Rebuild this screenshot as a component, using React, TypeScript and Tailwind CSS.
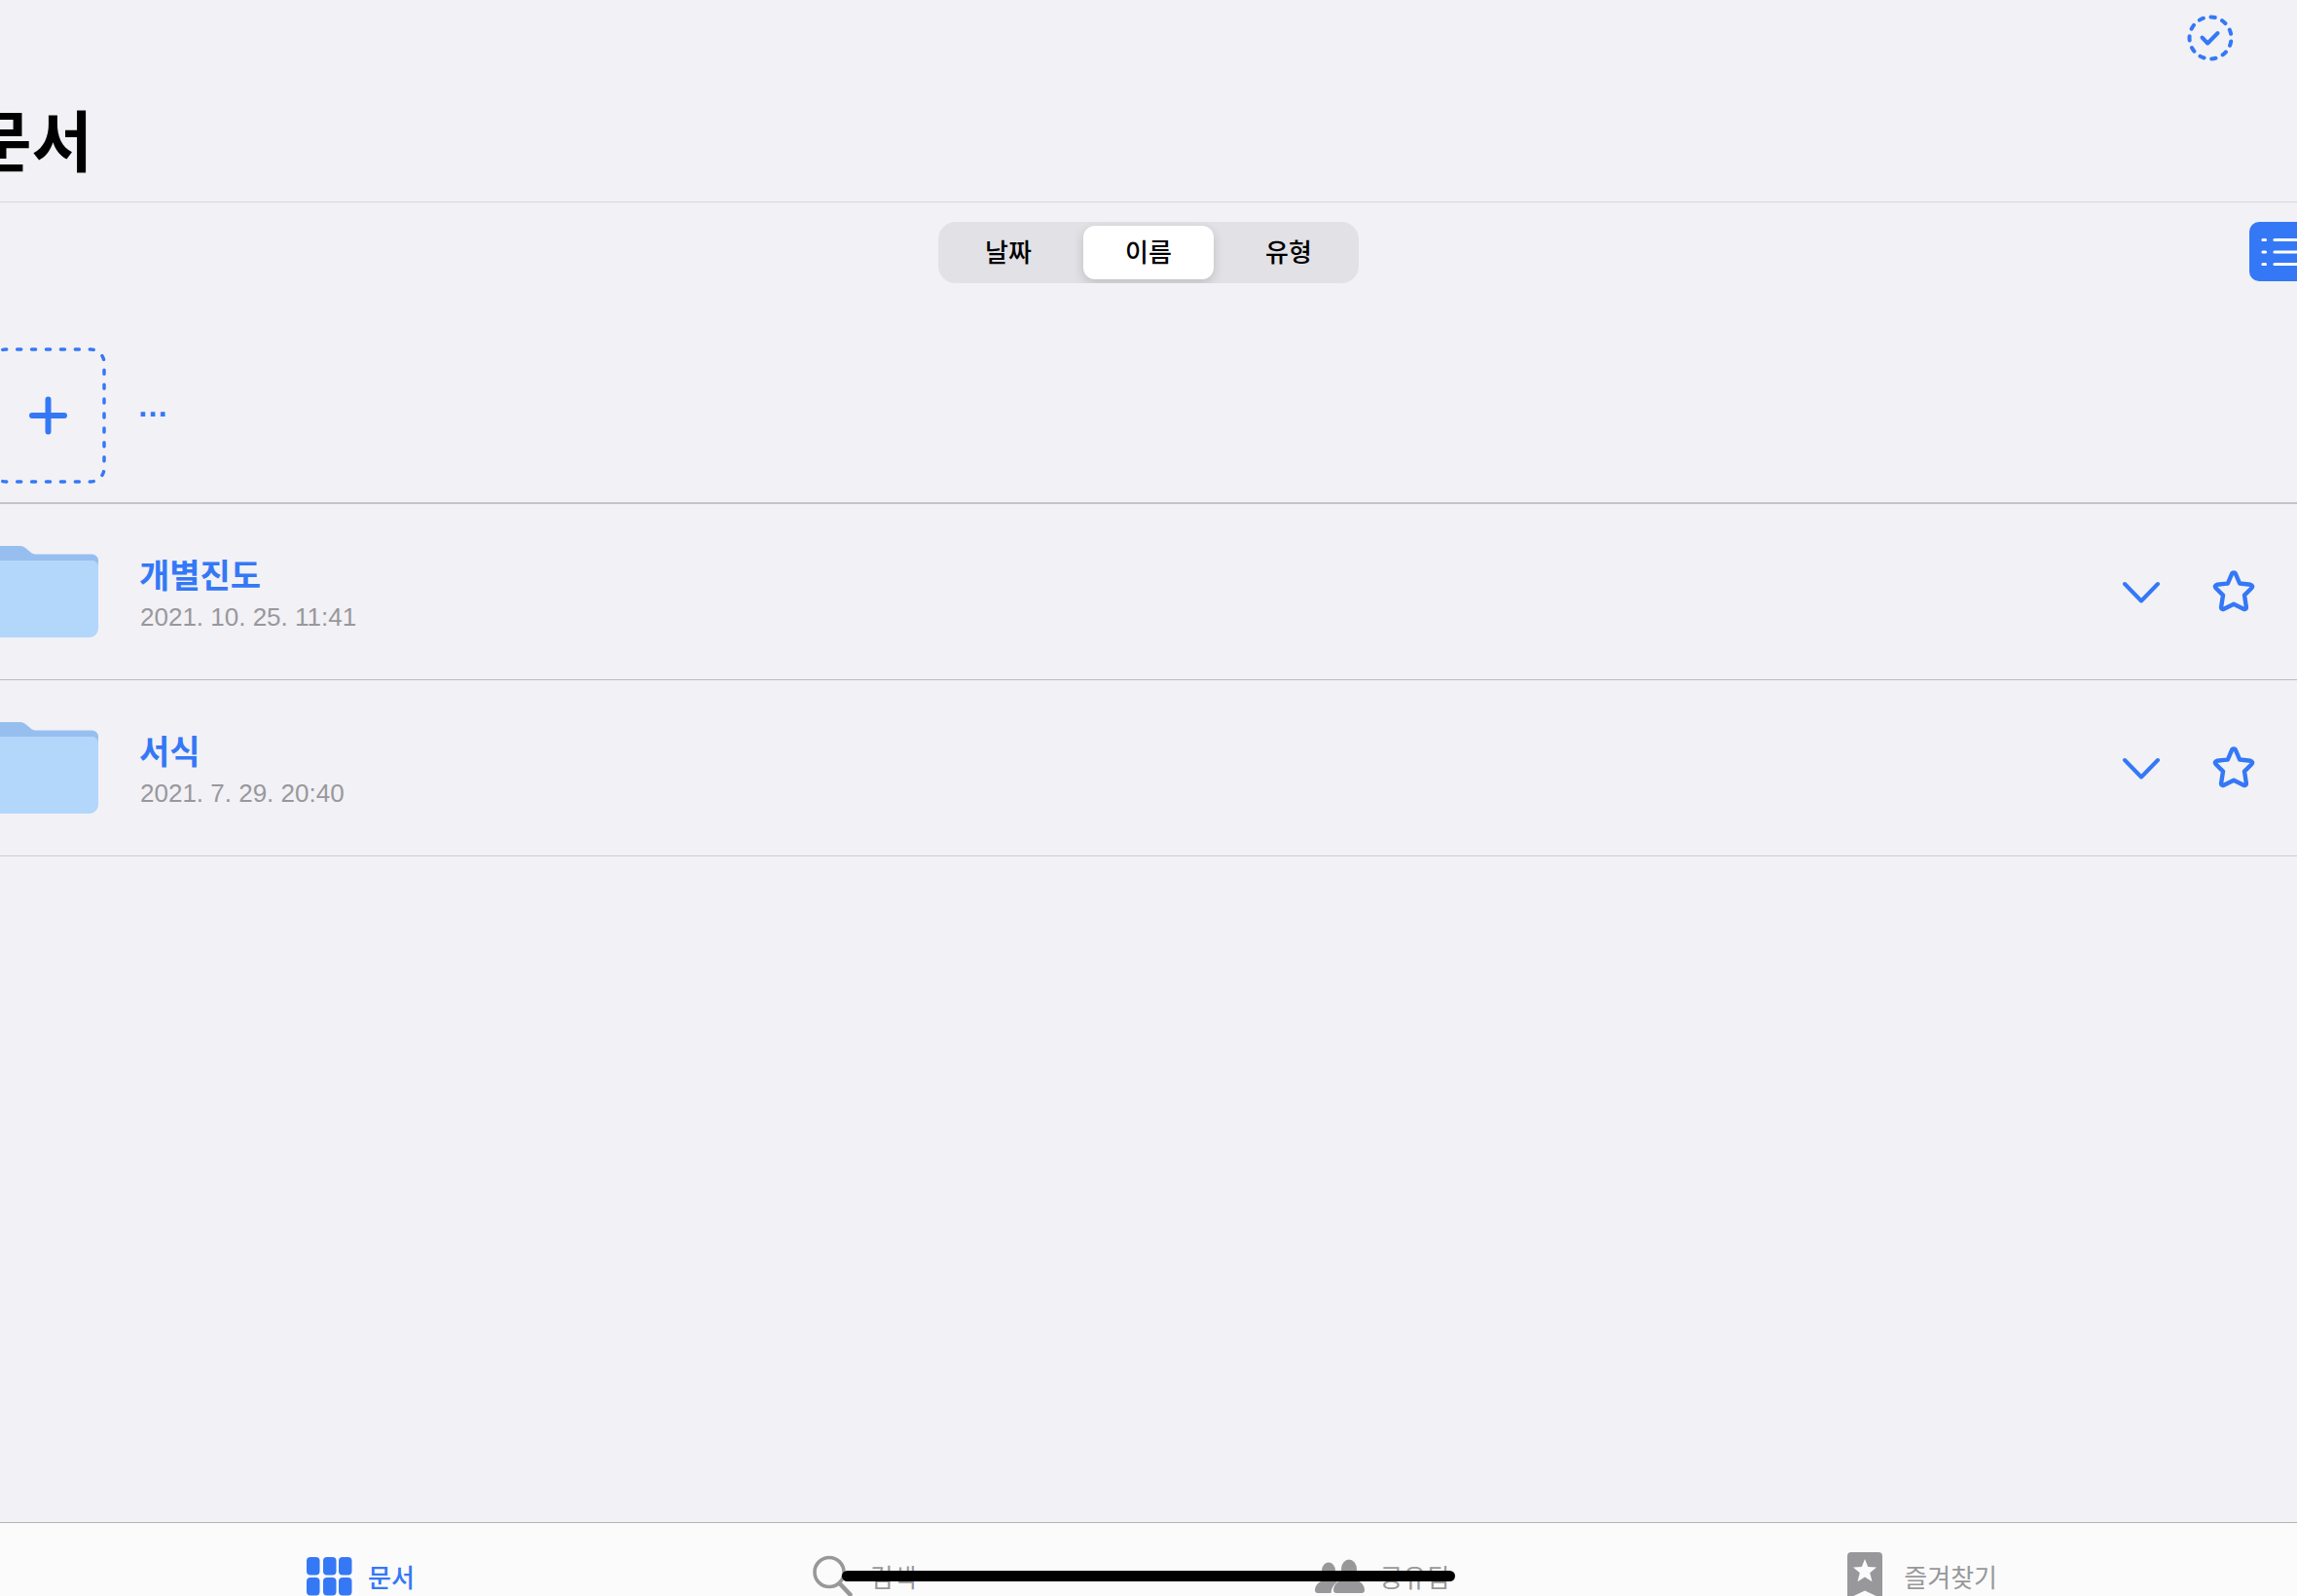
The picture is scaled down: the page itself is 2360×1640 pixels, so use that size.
import type { ReactNode } from 'react';

const FONT = "font-['Liberation_Sans','Noto_Sans_CJK_KR',sans-serif]";

type Entry = { name: string; date: string };

const entries: Entry[] = [
  { name: '개별진도', date: '2021. 10. 25. 11:41' },
  { name: '서식', date: '2021. 7. 29. 20:40' },
];

const STAR =
  'M24 7.5c1 0 1.7.6 2 1.4l4.1 9.6 11.2 1.3c1.8.3 2.4 2.2 1.1 3.4L35 30.6l1.9 12.2c.2 1.8-1.3 2.8-2.8 2L24 39.800l-10.1 5c-1.5.8-3-.2-2.800-2L13 30.6l-7.400-7.400c-1.300-1.200-.7-3.100 1.100-3.400l11.200-1.300L22 8.900c.3-.8 1-1.400 2-1.400z';

function SelectIcon() {
  return (
    <svg width="50" height="50" viewBox="0 0 50 50" fill="none" stroke="currentColor" strokeWidth="4" strokeLinecap="round" strokeLinejoin="round">
      <circle cx="25" cy="25" r="21.5" pathLength="110" strokeDasharray="3.6 6.4" strokeDashoffset="-2.9" />
      <path d="M16.500 24.500l5.700 6L32.500 20" />
    </svg>
  );
}

function ListIcon() {
  return (
    <svg width="50" height="32" viewBox="0 0 50 32" fill="none" stroke="currentColor" strokeWidth="3.200" strokeLinecap="round">
      <path d="M3 3.500h2.500M3 16h2.500M3 28.500h2.500M15 3.500h32M15 16h32M15 28.500h32" />
    </svg>
  );
}

function NewTile() {
  return (
    <svg width="120" height="142" viewBox="0 0 120 142" fill="none" stroke="currentColor" strokeLinecap="round">
      <path
        d="M59.500 3H103a14 14 0 0 1 14 14V125a14 14 0 0 1 -14 14H16a14 14 0 0 1 -14 -14V17a14 14 0 0 1 14 -14Z"
        pathLength="320"
        strokeWidth="3.500"
        strokeDasharray="2.700 7.300"
        strokeDashoffset="1.350"
      />
      <path d="M59.500 54.500v33M43 71h33" strokeWidth="6" />
    </svg>
  );
}

function FolderIcon() {
  return (
    <svg width="112" height="94" viewBox="0 0 112 94">
      <path d="M0 6a6 6 0 0 1 6-6H31c8 0 10 8.500 17 8.500h57a6.500 6.500 0 0 1 7 7V50H0z" fill="#96bff0" />
      <path d="M0 20a5 5 0 0 1 5-5H105a7 7 0 0 1 7 5.500V85a9 9 0 0 1 -9 9H9a9 9 0 0 1 -9 -9z" fill="#b2d7fb" />
    </svg>
  );
}

function ChevronIcon() {
  return (
    <svg width="40" height="24" viewBox="0 0 40 24" fill="none" stroke="currentColor" strokeWidth="4" strokeLinecap="round" strokeLinejoin="round">
      <path d="M3 4L20 21.500L37 4" />
    </svg>
  );
}

function StarIcon() {
  return (
    <svg width="48" height="52" viewBox="0 1 48 52" fill="none" stroke="currentColor" strokeWidth="4.400" strokeLinejoin="round">
      <path d={STAR} />
    </svg>
  );
}

function GridIcon() {
  return (
    <svg width="47" height="60" viewBox="0 -5 47 60" fill="currentColor">
      {[0, 17, 33].map((x) =>
        [0, 21].map((y) => <rect key={x + '-' + y} x={x} y={y} width="13.500" height="18.500" rx="4" />),
      )}
    </svg>
  );
}

function SearchIcon() {
  return (
    <svg width="43" height="60" viewBox="0 -5 43 60" fill="none" stroke="currentColor" strokeLinecap="round">
      <circle cx="17" cy="15.500" r="15" strokeWidth="3.600" />
      <path d="M28 27.500l10.500 11" strokeWidth="4.600" />
    </svg>
  );
}

function PeopleIcon() {
  return (
    <svg width="51" height="60" viewBox="0 -5 51 60" fill="currentColor">
      <ellipse cx="14" cy="14" rx="7" ry="8.500" />
      <ellipse cx="35" cy="12.500" rx="8" ry="10" />
      <path d="M0 34c0-6 6-11 14-11 4 0 7 1 9 2.500-4 2.800-6 6.500-6.500 11.500H3c-2 0-3-1-3-3z" />
      <path d="M19 34c0-7 7-12 16-12S51 27 51 34c0 2-1 3-3 3H22c-2 0-3-1-3-3z" />
    </svg>
  );
}

function BookmarkIcon() {
  return (
    <svg width="42" height="60" viewBox="0 0 42 60">
      <path d="M0 4a4 4 0 0 1 4-4h28a4 4 0 0 1 4 4V48L18 39.500 0 48z" fill="currentColor" />
      <path d="M18 7l3.200 8 8.800.6-6.800 5.600 2.300 9-7.500-4.700-7.500 4.700 2.300-9L6 15.600l8.800-.6z" fill="#fbfbfc" />
    </svg>
  );
}

function Tab({ icon, label, active }: { icon: ReactNode; label: string; active?: boolean }) {
  return (
    <button
      type="button"
      aria-current={active ? 'page' : undefined}
      className={
        'flex items-start gap-4 whitespace-nowrap text-[26px] leading-10 ' +
        (active ? 'font-medium text-[#3478f6]' : 'font-normal text-[#98989a]')
      }
    >
      <span className="pt-[30px]">{icon}</span>
      <span className="pt-[37px]">{label}</span>
    </button>
  );
}

function Segment({ label, checked }: { label: string; checked?: boolean }) {
  return (
    <label className="flex w-36 cursor-pointer px-[5px] py-1">
      <input type="radio" name="sort" defaultChecked={checked} className="peer sr-only" />
      <span className="flex flex-1 items-center justify-center rounded-xl text-[26px] leading-none font-medium text-black peer-checked:bg-white peer-checked:shadow-[0_4px_12px_rgba(0,0,0,0.16)]">
        {label}
      </span>
    </label>
  );
}

export default function App() {
  return (
    <div className={'relative flex h-screen flex-col overflow-hidden bg-[#f2f1f6] ' + FONT}>
      <header className="border-b border-[#d8d7dc]">
        <div className="flex h-[77px] items-center justify-end pr-16">
          <button type="button" aria-label="선택" className="text-[#3478f6]">
            <SelectIcon />
          </button>
        </div>
        <h1 className="-ml-[30px] h-[130px] text-[68px] leading-[140px] font-bold text-black">문서</h1>
      </header>

      <div className="grid grid-cols-[1fr_auto_1fr] items-start pt-5">
        <fieldset aria-label="정렬" className="col-start-2 flex h-[63px] overflow-hidden rounded-[18px] bg-[#e2e1e6]">
          <Segment label="날짜" />
          <Segment label="이름" checked />
          <Segment label="유형" />
        </fieldset>
        <button
          type="button"
          aria-label="목록 보기"
          className="-mr-5 flex h-[61px] items-center justify-self-end rounded-[10px] bg-[#3478f6] pr-2 pl-[11px] text-white"
        >
          <ListIcon />
        </button>
      </div>

      <main className="flex-1">
        <button
          type="button"
          aria-label="새로 만들기"
          className="mt-[65px] -ml-[10px] flex h-[142px] items-center gap-[31px] text-[#3478f6]"
        >
          <NewTile />
          <span className="pb-5 text-[32px] leading-none font-bold">…</span>
        </button>
        <ul className="mt-[18px] border-t-2 border-[#c4c3c9]">
          {entries.map((entry) => (
            <li key={entry.name} className="flex h-[181px] items-center border-b border-[#bbbabf] pr-[41px] last:border-[#cfced4]">
              <a href="#" className="-ml-[11px] flex flex-1 items-center gap-[42px]">
                <FolderIcon />
                <span className="flex flex-col pt-2">
                  <span className="text-[34px] leading-[44px] font-bold text-[#3478f6]">{entry.name}</span>
                  <time className="pl-px text-[26px] leading-10 text-[#98989c]">{entry.date}</time>
                </span>
              </a>
              <div className="flex items-center gap-[51px] text-[#3478f6]">
                <button type="button" aria-label={entry.name + ' 메뉴'}>
                  <ChevronIcon />
                </button>
                <button type="button" aria-label={entry.name + ' 즐겨찾기'}>
                  <StarIcon />
                </button>
              </div>
            </li>
          ))}
        </ul>
      </main>

      <nav className="flex h-[76px] shrink-0 justify-between overflow-hidden border-t border-[#b3b2b5] bg-[#fbfbfc] pr-[308px] pl-[315px]">
        <Tab icon={<GridIcon />} label="문서" active />
        <Tab icon={<SearchIcon />} label="검색" />
        <Tab icon={<PeopleIcon />} label="공유됨" />
        <Tab icon={<BookmarkIcon />} label="즐겨찾기" />
      </nav>
      <div className="absolute bottom-[15px] left-1/2 h-[11px] w-[630px] -translate-x-1/2 rounded-full bg-black" />
    </div>
  );
}
